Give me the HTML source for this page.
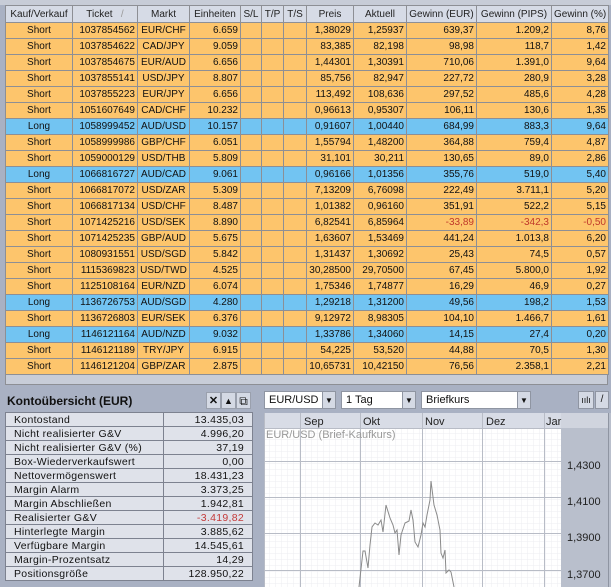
<!DOCTYPE html>
<html><head><meta charset="utf-8"><style>
*{margin:0;padding:0;box-sizing:border-box}
body{width:611px;height:587px;overflow:hidden;background:#a9b1c3;font-family:"Liberation Sans",sans-serif;font-size:11px;color:#111;position:relative}
.abs{position:absolute}
table{border-collapse:collapse;table-layout:fixed}
#t{position:absolute;left:5px;top:5px;width:603px;font-size:10px}
#t td{height:16px;border:1px solid #8d8f95;padding:0 2px;white-space:nowrap;overflow:hidden;text-align:right}
#t tr.h td{height:17px;background:#d6dbe6;text-align:center;color:#222}
#t tr.s td{background:#fdc56c}
#t tr.l td{background:#72c4f2}
#t td.c{text-align:center}
.neg{color:#c0392b}
#k{position:absolute;left:5px;top:412px;width:247px}
#k td{height:14px;border:1px solid #7d8290;padding:0 8px 0 8px;background:#dfe2ea;letter-spacing:0.3px;font-size:10.5px}
#k td.v{text-align:right}
.btn{position:absolute;top:392px;width:15px;height:17px;background:#d4d9e4;border:1px solid #9aa0ad;font-size:11px;font-weight:bold;text-align:center;line-height:16px}
.combo{position:absolute;top:391px;height:18px;background:#fff;border:1px solid #8f95a2;padding-left:4px;line-height:16px;font-size:11px}
.arr{position:absolute;top:391px;width:14px;height:18px;background:#d4d9e4;border:1px solid #8f95a2;font-size:8px;text-align:center;line-height:17px}
</style></head><body>
<div class="abs" style="left:0;top:0;width:611px;height:5px;background:#c7ccd7"></div>
<div class="abs" style="left:5px;top:374px;width:603px;height:11px;background:#c8cdd8;border:1px solid #8d8f95;border-top:none"></div>
<table id="t">
<colgroup><col style="width:67px"><col style="width:65px"><col style="width:52px"><col style="width:51px"><col style="width:21px"><col style="width:22px"><col style="width:23px"><col style="width:47px"><col style="width:53px"><col style="width:70px"><col style="width:75px"><col style="width:57px"></colgroup>
<tr class="h"><td>Kauf/Verkauf</td><td>Ticket &nbsp; <span style="color:#999">/</span></td><td>Markt</td><td>Einheiten</td><td>S/L</td><td>T/P</td><td>T/S</td><td>Preis</td><td>Aktuell</td><td>Gewinn (EUR)</td><td>Gewinn (PIPS)</td><td>Gewinn (%)</td></tr>
<tr class="s"><td class="c">Short</td><td>1037854562</td><td class="c">EUR/CHF</td><td>6.659</td><td></td><td></td><td></td><td>1,38029</td><td>1,25937</td><td>639,37</td><td>1.209,2</td><td>8,76</td></tr>
<tr class="s"><td class="c">Short</td><td>1037854622</td><td class="c">CAD/JPY</td><td>9.059</td><td></td><td></td><td></td><td>83,385</td><td>82,198</td><td>98,98</td><td>118,7</td><td>1,42</td></tr>
<tr class="s"><td class="c">Short</td><td>1037854675</td><td class="c">EUR/AUD</td><td>6.656</td><td></td><td></td><td></td><td>1,44301</td><td>1,30391</td><td>710,06</td><td>1.391,0</td><td>9,64</td></tr>
<tr class="s"><td class="c">Short</td><td>1037855141</td><td class="c">USD/JPY</td><td>8.807</td><td></td><td></td><td></td><td>85,756</td><td>82,947</td><td>227,72</td><td>280,9</td><td>3,28</td></tr>
<tr class="s"><td class="c">Short</td><td>1037855223</td><td class="c">EUR/JPY</td><td>6.656</td><td></td><td></td><td></td><td>113,492</td><td>108,636</td><td>297,52</td><td>485,6</td><td>4,28</td></tr>
<tr class="s"><td class="c">Short</td><td>1051607649</td><td class="c">CAD/CHF</td><td>10.232</td><td></td><td></td><td></td><td>0,96613</td><td>0,95307</td><td>106,11</td><td>130,6</td><td>1,35</td></tr>
<tr class="l"><td class="c">Long</td><td>1058999452</td><td class="c">AUD/USD</td><td>10.157</td><td></td><td></td><td></td><td>0,91607</td><td>1,00440</td><td>684,99</td><td>883,3</td><td>9,64</td></tr>
<tr class="s"><td class="c">Short</td><td>1058999986</td><td class="c">GBP/CHF</td><td>6.051</td><td></td><td></td><td></td><td>1,55794</td><td>1,48200</td><td>364,88</td><td>759,4</td><td>4,87</td></tr>
<tr class="s"><td class="c">Short</td><td>1059000129</td><td class="c">USD/THB</td><td>5.809</td><td></td><td></td><td></td><td>31,101</td><td>30,211</td><td>130,65</td><td>89,0</td><td>2,86</td></tr>
<tr class="l"><td class="c">Long</td><td>1066816727</td><td class="c">AUD/CAD</td><td>9.061</td><td></td><td></td><td></td><td>0,96166</td><td>1,01356</td><td>355,76</td><td>519,0</td><td>5,40</td></tr>
<tr class="s"><td class="c">Short</td><td>1066817072</td><td class="c">USD/ZAR</td><td>5.309</td><td></td><td></td><td></td><td>7,13209</td><td>6,76098</td><td>222,49</td><td>3.711,1</td><td>5,20</td></tr>
<tr class="s"><td class="c">Short</td><td>1066817134</td><td class="c">USD/CHF</td><td>8.487</td><td></td><td></td><td></td><td>1,01382</td><td>0,96160</td><td>351,91</td><td>522,2</td><td>5,15</td></tr>
<tr class="s"><td class="c">Short</td><td>1071425216</td><td class="c">USD/SEK</td><td>8.890</td><td></td><td></td><td></td><td>6,82541</td><td>6,85964</td><td class="neg">-33,89</td><td class="neg">-342,3</td><td class="neg">-0,50</td></tr>
<tr class="s"><td class="c">Short</td><td>1071425235</td><td class="c">GBP/AUD</td><td>5.675</td><td></td><td></td><td></td><td>1,63607</td><td>1,53469</td><td>441,24</td><td>1.013,8</td><td>6,20</td></tr>
<tr class="s"><td class="c">Short</td><td>1080931551</td><td class="c">USD/SGD</td><td>5.842</td><td></td><td></td><td></td><td>1,31437</td><td>1,30692</td><td>25,43</td><td>74,5</td><td>0,57</td></tr>
<tr class="s"><td class="c">Short</td><td>1115369823</td><td class="c">USD/TWD</td><td>4.525</td><td></td><td></td><td></td><td>30,28500</td><td>29,70500</td><td>67,45</td><td>5.800,0</td><td>1,92</td></tr>
<tr class="s"><td class="c">Short</td><td>1125108164</td><td class="c">EUR/NZD</td><td>6.074</td><td></td><td></td><td></td><td>1,75346</td><td>1,74877</td><td>16,29</td><td>46,9</td><td>0,27</td></tr>
<tr class="l"><td class="c">Long</td><td>1136726753</td><td class="c">AUD/SGD</td><td>4.280</td><td></td><td></td><td></td><td>1,29218</td><td>1,31200</td><td>49,56</td><td>198,2</td><td>1,53</td></tr>
<tr class="s"><td class="c">Short</td><td>1136726803</td><td class="c">EUR/SEK</td><td>6.376</td><td></td><td></td><td></td><td>9,12972</td><td>8,98305</td><td>104,10</td><td>1.466,7</td><td>1,61</td></tr>
<tr class="l"><td class="c">Long</td><td>1146121164</td><td class="c">AUD/NZD</td><td>9.032</td><td></td><td></td><td></td><td>1,33786</td><td>1,34060</td><td>14,15</td><td>27,4</td><td>0,20</td></tr>
<tr class="s"><td class="c">Short</td><td>1146121189</td><td class="c">TRY/JPY</td><td>6.915</td><td></td><td></td><td></td><td>54,225</td><td>53,520</td><td>44,88</td><td>70,5</td><td>1,30</td></tr>
<tr class="s"><td class="c">Short</td><td>1146121204</td><td class="c">GBP/ZAR</td><td>2.875</td><td></td><td></td><td></td><td>10,65731</td><td>10,42150</td><td>76,56</td><td>2.358,1</td><td>2,21</td></tr>
</table>

<div class="abs" style="left:7px;top:394px;font-size:12px;font-weight:bold">Kontoübersicht (EUR)</div>
<div class="btn" style="left:206px">✕</div>
<div class="btn" style="left:221px;font-size:9px">▲</div>
<div class="btn" style="left:236px;font-weight:normal;font-size:12px">⧉</div>
<table id="k">
<colgroup><col style="width:158px"><col style="width:89px"></colgroup>
<tr><td>Kontostand</td><td class="v">13.435,03</td></tr>
<tr><td>Nicht realisierter G&amp;V</td><td class="v">4.996,20</td></tr>
<tr><td>Nicht realisierter G&amp;V (%)</td><td class="v">37,19</td></tr>
<tr><td>Box-Wiederverkaufswert</td><td class="v">0,00</td></tr>
<tr><td>Nettovermögenswert</td><td class="v">18.431,23</td></tr>
<tr><td>Margin Alarm</td><td class="v">3.373,25</td></tr>
<tr><td>Margin Abschließen</td><td class="v">1.942,81</td></tr>
<tr><td>Realisierter G&amp;V</td><td class="v" style="color:#c43a3a">-3.419,82</td></tr>
<tr><td>Hinterlegte Margin</td><td class="v">3.885,62</td></tr>
<tr><td>Verfügbare Margin</td><td class="v">14.545,61</td></tr>
<tr><td>Margin-Prozentsatz</td><td class="v">14,29</td></tr>
<tr><td>Positionsgröße</td><td class="v">128.950,22</td></tr>
</table>

<div class="combo" style="left:264px;width:59px">EUR/USD</div><div class="arr" style="left:322px">▼</div>
<div class="combo" style="left:341px;width:62px">1 Tag</div><div class="arr" style="left:402px">▼</div>
<div class="combo" style="left:421px;width:97px">Briefkurs</div><div class="arr" style="left:517px">▼</div>
<div class="abs" style="left:578px;top:391px;width:16px;height:18px;background:#d4d9e4;border:1px solid #8f95a2;font-size:9px;text-align:center;line-height:16px">ıılı</div>
<div class="abs" style="left:595px;top:391px;width:14px;height:18px;background:#d4d9e4;border:1px solid #8f95a2;font-size:10px;text-align:center;line-height:16px">/</div>

<svg class="abs" style="left:264px;top:413px" width="347" height="174" viewBox="264 413 347 174">
<defs><pattern id="g" x="264" y="428" width="6" height="6" patternUnits="userSpaceOnUse"><path d="M6 0V6M0 6H6" stroke="#eceef2" stroke-width="1" fill="none"/></pattern></defs>
<rect x="264" y="413" width="297" height="174" fill="#fff"/>
<rect x="264" y="428" width="297" height="159" fill="url(#g)"/>
<rect x="264" y="413" width="297" height="15" fill="#d8dce6"/>
<rect x="561" y="413" width="50" height="174" fill="#b9bfcc"/>
<rect x="561" y="413" width="47" height="15" fill="#d0d4de"/>
<g stroke="#b8bcc6" stroke-width="1">
<line x1="264.5" y1="413" x2="264.5" y2="587"/>
<line x1="300.5" y1="413" x2="300.5" y2="587"/>
<line x1="360.5" y1="413" x2="360.5" y2="587"/>
<line x1="422.5" y1="413" x2="422.5" y2="587"/>
<line x1="482.5" y1="413" x2="482.5" y2="587"/>
<line x1="544.5" y1="413" x2="544.5" y2="587"/>
<line x1="264" y1="428.5" x2="561" y2="428.5"/>
<line x1="264" y1="461.5" x2="561" y2="461.5"/>
<line x1="264" y1="497.5" x2="561" y2="497.5"/>
<line x1="264" y1="533.5" x2="561" y2="533.5"/>
<line x1="264" y1="570.5" x2="561" y2="570.5"/>
</g>
<line x1="608.5" y1="413" x2="608.5" y2="587" stroke="#8f95a2"/>
<polyline fill="none" stroke="#8a8a8a" stroke-width="1" points="359,587 363,551 365,551 368,568 370,545 372,527 375,523 378,525 381,520 383,532 386,505 390,518 393,525 395,533 397,530 399,555 401,535 405,523 409,521 411,510 413,520 415,542 418,547 421,535 423,523 425,527 427,515 430,500 431,481 434,505 437,515 440,530 441,553 443,558 445,550 446,573 449,570 451,572 454,587"/>
<g font-family="Liberation Sans" font-size="11" fill="#222">
<text x="304" y="425">Sep</text><text x="363" y="425">Okt</text><text x="425" y="425">Nov</text><text x="486" y="425">Dez</text><text x="546" y="425">Jar</text>
<text x="567" y="469">1,4300</text><text x="567" y="505">1,4100</text><text x="567" y="541">1,3900</text><text x="567" y="578">1,3700</text>
</g>
<text x="266" y="438" font-family="Liberation Sans" font-size="11" fill="#999">EUR/USD (Brief-Kaufkurs)</text>
</svg>
</body></html>
